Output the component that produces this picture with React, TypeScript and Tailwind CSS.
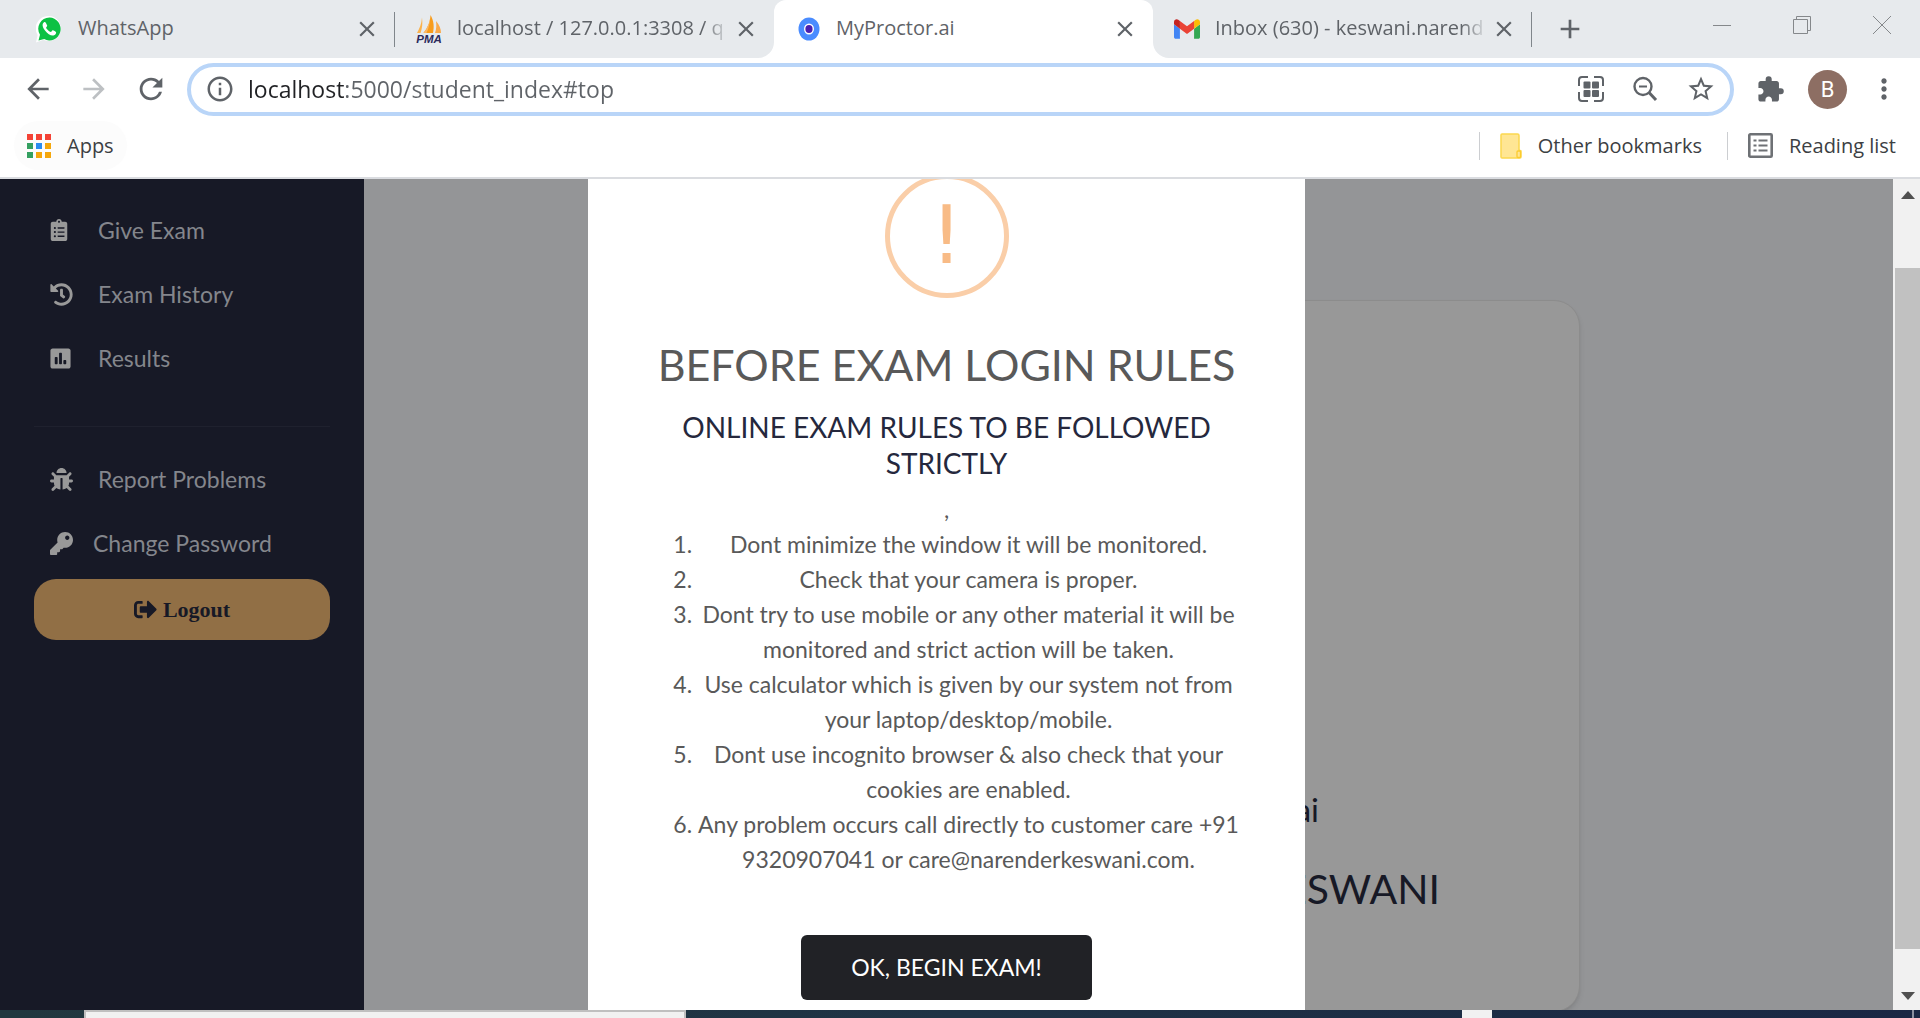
import React from "react";
import type { ReactNode } from "react";
import {
  MdAdd,
  MdArrowBack,
  MdArrowForward,
  MdClose,
  MdExtension,
  MdInfoOutline,
  MdMoreVert,
  MdRefresh,
  MdStarBorder,
} from "react-icons/md";
import { FaBug, FaClipboardList, FaHistory, FaKey, FaPoll, FaSignOutAlt } from "react-icons/fa";

function WhatsAppIcon() {
  return (
    <svg viewBox="0 0 26 28" className="h-7 w-[26px] shrink-0">
      <path d="M13 1a12 12.500 0 1 1-5.500 23.700L0 27.500l1.600-7.500A12.500 12.500 0 0 1 13 1z" fill="#fff" />
      <path d="M13.500 2.500a11 11.500 0 1 1-5.300 21.500L2.500 25.500l1.500-5.800A11.300 11.300 0 0 1 13.500 2.500z" fill="#0cc143" />
      <path
        d="M9.800 7.700c-.4-.9-1.200-.9-1.800-.5-2.300 1.700-1.500 5 .8 8 2.800 3.700 6 5.600 8.600 5.200 1.900-.3 2.900-1.900 2.700-3.200-.1-.5-2.600-1.700-3.200-1.900-.9-.2-1.300 1.700-2 1.700-1.400-.2-4.500-2.900-4.800-4.200 0-.7 1.300-1.400 1.100-2.200z"
        fill="#fff"
      />
    </svg>
  );
}

function PmaIcon() {
  return (
    <svg viewBox="0 0 28 30" className="h-[30px] w-7 shrink-0">
      <path d="M7 3.500c.8 6 .2 11-1.500 15.500H2c2.500-4.500 4.500-9 5-15.500z" fill="#fbb24c" />
      <path d="M15.500 1c3.500 6 3.800 12 2.500 18H8.500C12.500 14 15 8.500 15.500 1z" fill="#f89c1c" />
      <path d="M15.500 1c-.5 7-1.500 13-4 18H8.500C12.500 14 15 8.500 15.500 1z" fill="#fbb868" />
      <path d="M21 7c3.500 4 5 8 5 12h-6c1.500-4 1.500-8 1-12z" fill="#f9a94a" />
      <text x="14" y="28.500" textAnchor="middle" fontFamily="Liberation Sans" fontWeight="700" fontStyle="italic" fontSize="11.500" fill="#2c2a5c">
        PMA
      </text>
    </svg>
  );
}

function ProctorIcon() {
  return (
    <svg viewBox="0 0 22 24" className="ml-1 h-6 w-[22px] shrink-0">
      <ellipse cx="11" cy="12" rx="10.500" ry="11.500" fill="#4a8cff" />
      <ellipse cx="11" cy="12" rx="5" ry="5.500" fill="#fff" />
      <ellipse cx="11" cy="12" rx="3.600" ry="4" fill="#4a1fb0" />
    </svg>
  );
}

function GmailIcon() {
  return (
    <svg viewBox="52 42 88 66" className="ml-px h-5 w-[26px] shrink-0">
      <path fill="#4285f4" d="M58 108h14V74L52 59v43c0 3.320 2.690 6 6 6" />
      <path fill="#34a853" d="M120 108h14c3.320 0 6-2.690 6-6V59l-20 15" />
      <path fill="#fbbc04" d="M120 48v26l20-15v-8c0-7.420-8.470-11.650-14.400-7.200" />
      <path fill="#ea4335" d="M72 74V48l24 18 24-18v26L96 92" />
      <path fill="#c5221f" d="M52 51v8l20 15V48l-5.600-4.200c-5.940-4.450-14.400-.22-14.400 7.200" />
    </svg>
  );
}

function QrIcon() {
  return (
    <svg viewBox="0 0 26 26" className="size-[26px]" fill="none" stroke="#5f6368" strokeWidth="2">
      <path d="M1 10V4a3 3 0 0 1 3-3h6M16 1h6a3 3 0 0 1 3 3v6M25 16v6a3 3 0 0 1-3 3h-6M10 25H4a3 3 0 0 1-3-3v-6" />
      <g fill="#5f6368" stroke="none">
        <rect x="5.500" y="5.500" width="7" height="7" rx="1" />
        <rect x="14" y="5.500" width="7" height="7" rx="1" />
        <rect x="5.500" y="14" width="7" height="7" rx="1" />
        <rect x="14" y="14" width="7" height="7" rx="1" />
      </g>
    </svg>
  );
}

function ZoomOutIcon() {
  return (
    <svg viewBox="0 0 26 26" className="size-[26px]" fill="none" stroke="#5f6368">
      <circle cx="11" cy="10.500" r="8.500" strokeWidth="2.400" />
      <path d="M7 10.500h8" strokeWidth="2" />
      <path d="M17 16.500l7 7.500" strokeWidth="3" />
    </svg>
  );
}

function AppsIcon() {
  const colors = ["#f44336", "#f44336", "#f44336", "#34a060", "#2b8cf0", "#f5a70c", "#34a060", "#f5a70c", "#f5a70c"];
  return (
    <svg viewBox="0 0 24 24" className="size-6">
      {colors.map((c, i) => (
        <rect key={i} x={(i % 3) * 9} y={Math.floor(i / 3) * 9} width="6" height="6" fill={c} />
      ))}
    </svg>
  );
}

function FolderIcon() {
  return (
    <svg viewBox="0 0 22 26" className="h-[26px] w-[22px]">
      <path d="M2 1h15.500a1.500 1.500 0 0 1 1.500 1.500V17l2 1v6a1 1 0 0 1-1 1H2a1 1 0 0 1-1-1V2a1 1 0 0 1 1-1z" fill="#ffe694" stroke="#fcd84f" strokeWidth="1.500" />
      <rect x="17" y="18" width="3.500" height="6.500" rx="1" fill="#ffe694" stroke="#fccb2e" strokeWidth="1.300" />
    </svg>
  );
}

function ReadingIcon() {
  return (
    <svg viewBox="0 0 25 25" className="size-[25px]" fill="none" stroke="#6e7175" strokeWidth="2.600">
      <rect x="1.300" y="1.300" width="22.400" height="22.400" rx="1" />
      <path d="M5.500 7.500h3M5.500 12.500h3M5.500 17.500h3M10.500 7.500h9M10.500 12.500h9M10.500 17.500h9" strokeWidth="2.200" />
    </svg>
  );
}

function Tab({ icon, title, active, fade }: { icon: ReactNode; title: string; active?: boolean; fade?: boolean }) {
  return (
    <div className={active ? "relative flex h-full w-[379px] min-w-0 items-center rounded-t-xl bg-white pr-3 pl-5" : "flex h-full w-[379px] min-w-0 items-center pr-3 pl-5"}>
      {active && (
        <>
          <svg viewBox="0 0 16 16" className="absolute bottom-0 -left-4 size-4">
            <path d="M16 0v16H0A16 16 0 0 0 16 0z" fill="#fff" />
          </svg>
          <svg viewBox="0 0 16 16" className="absolute -right-4 bottom-0 size-4">
            <path d="M0 0v16h16A16 16 0 0 1 0 0z" fill="#fff" />
          </svg>
        </>
      )}
      <span className="flex w-7 shrink-0 justify-start">{icon}</span>
      <span
        className={
          fade
            ? "ml-[14px] min-w-0 flex-1 overflow-hidden pb-[2px] whitespace-nowrap [mask-image:linear-gradient(90deg,#000_90%,transparent)]"
            : "ml-[14px] min-w-0 flex-1 overflow-hidden pb-[2px] whitespace-nowrap"
        }
      >
        {title}
      </span>
      <button aria-label={`Close ${title}`} className="flex size-8 shrink-0 items-center justify-center text-[#5f6368]">
        <MdClose size={26} />
      </button>
    </div>
  );
}

function NavLink({ icon, label, tight }: { icon: ReactNode; label: string; tight?: boolean }) {
  return (
    <a href="#top" className="flex h-16 items-center pl-4 text-[23px] text-[#84868c]">
      <span className="w-[23px] text-[#999]">{icon}</span>
      <span className={tight ? "ml-5" : "ml-[25px]"}>{label}</span>
    </a>
  );
}

const rules = [
  "Dont minimize the window it will be monitored.",
  "Check that your camera is proper.",
  "Dont try to use mobile or any other material it will be monitored and strict action will be taken.",
  "Use calculator which is given by our system not from your laptop/desktop/mobile.",
  "Dont use incognito browser & also check that your cookies are enabled.",
  "Any problem occurs call directly to customer care +91 9320907041 or care@narenderkeswani.com.",
];

export default function App() {
  return (
    <div className="flex h-screen flex-col overflow-hidden bg-white font-['Open_Sans',sans-serif]">
      <header className="shrink-0 border-b-2 border-[#dadce0]">
        <div className="flex h-[58px] items-center bg-[#e7eaed] pl-4 text-[20px] text-[#5f6368]">
          <Tab icon={<WhatsAppIcon />} title="WhatsApp" />
          <span className="-ml-px h-[35px] w-px shrink-0 bg-[#80868b]" />
          <Tab icon={<PmaIcon />} title="localhost / 127.0.0.1:3308 / q" fade />
          <Tab icon={<ProctorIcon />} title="MyProctor.ai" active />
          <Tab icon={<GmailIcon />} title="Inbox (630) - keswani.narend" fade />
          <span className="-ml-px h-[35px] w-px shrink-0 bg-[#80868b]" />
          <button aria-label="New tab" className="ml-[22px] shrink-0">
            <MdAdd size={32} />
          </button>
          <div className="mr-7 mb-2 ml-auto flex items-center gap-[60px]">
            <button aria-label="Minimize">
              <svg viewBox="0 0 20 20" className="size-5" stroke="#85888b"><path d="M1 10.500h18" /></svg>
            </button>
            <button aria-label="Restore">
              <svg viewBox="0 0 20 20" className="size-5" stroke="#85888b" fill="none"><path d="M1.500 4.500h14v14h-14zM4.500 4.500v-3h14v14h-3" /></svg>
            </button>
            <button aria-label="Close window">
              <svg viewBox="0 0 20 20" className="size-5" stroke="#85888b"><path d="M1 1l18 18M19 1L1 19" /></svg>
            </button>
          </div>
        </div>

        <div className="flex h-[62px] items-center pr-5 pl-[22px] text-[#5f6368]">
          <button aria-label="Back"><MdArrowBack size={32} /></button>
          <button aria-label="Forward" className="ml-6 text-[#bdc0c3]"><MdArrowForward size={32} /></button>
          <button aria-label="Reload" className="ml-6"><MdRefresh size={34} /></button>
          <div className="ml-[19px] flex h-[53px] min-w-0 flex-1 items-center gap-7 rounded-full border-4 border-[#b9d5f8] pr-[14px] pl-[14px]">
            <MdInfoOutline size={30} className="shrink-0" />
            <input
              aria-label="Address"
              defaultValue="localhost:5000/student_index#top"
              className="-ml-[15px] min-w-0 flex-1 bg-[linear-gradient(90deg,#202124_98px,#5f6368_98px)] bg-clip-text text-[23px] text-transparent outline-none"
            />
            <button aria-label="QR code"><QrIcon /></button>
            <button aria-label="Zoom"><ZoomOutIcon /></button>
            <button aria-label="Bookmark this page"><MdStarBorder size={30} /></button>
          </div>
          <button aria-label="Extensions" className="ml-[22px]"><MdExtension size={29} /></button>
          <button aria-label="Profile" className="ml-[23px] flex size-[39px] items-center justify-center rounded-full bg-[#8d6e63] font-['Roboto',sans-serif] text-[22px] text-white">B</button>
          <button aria-label="Menu" className="ml-[21px]"><MdMoreVert size={32} /></button>
        </div>

        <div className="flex h-[57px] items-start justify-between px-[14px] pt-[1px] text-[20px] text-[#3c4043]">
          <button className="flex h-[49px] items-center gap-4 rounded-full bg-[#fcfcfc] px-[13px]">
            <AppsIcon />
            Apps
          </button>
          <div className="flex h-[49px] items-center pr-[10px]">
            <span className="h-7 w-px bg-[#ccced1]" />
            <button className="ml-5 flex items-center gap-4"><FolderIcon />Other bookmarks</button>
            <span className="ml-[25px] h-7 w-px bg-[#ccced1]" />
            <button className="ml-5 flex items-center gap-4"><ReadingIcon />Reading list</button>
          </div>
        </div>
      </header>

      <div className="flex min-h-0 flex-1">
        <div className="relative flex min-w-0 flex-1 overflow-hidden bg-[#949597] font-['Lato',sans-serif]">
          <aside className="w-[364px] shrink-0 bg-[#171926] px-[34px] pt-[19px]">
            <nav>
              <NavLink icon={<FaClipboardList size={22} className="-ml-[2px]" />} label="Give Exam" />
              <NavLink icon={<FaHistory size={23} />} label="Exam History" />
              <NavLink icon={<FaPoll size={23} className="-ml-px" />} label="Results" />
              <hr className="mt-9 mb-5 border-[#1f212e]" />
              <NavLink icon={<FaBug size={23} />} label="Report Problems" />
              <NavLink icon={<FaKey size={23} />} label="Change Password" tight />
            </nav>
            <button className="mt-1 flex h-[61px] w-full items-center justify-center gap-[6px] rounded-[22px] bg-[#916f45] font-['Liberation_Serif',serif] text-[22px] font-bold text-[#171926]">
              <FaSignOutAlt size={23} />
              Logout
            </button>
          </aside>

          <main className="flex min-w-0 flex-1 justify-end pt-[121px] pr-[313px]">
            <section className="flex h-[712px] w-[704px] flex-col items-end rounded-[26px] border border-[#8c8c8c] bg-[#989898] pt-[488px] pr-[139px] text-[#171926] shadow-md">
              <h3 className="pr-[121px] text-[33px] leading-10">ai</h3>
              <h2 className="mt-9 text-[41px] leading-[48px]">KESWANI</h2>
            </section>
          </main>

          <div className="pointer-events-none absolute inset-0 flex items-start justify-center">
            <div role="dialog" aria-labelledby="rules-title" className="pointer-events-auto -mt-5 flex w-[717px] flex-col items-center bg-white px-[66px] pt-[15px] pb-10 text-center text-[#595959]">
              <div className="flex size-[124px] items-center justify-center rounded-full border-[5px] border-[#facea8] font-['DejaVu_Sans',sans-serif] text-[80px] leading-none text-[#f8bb86]">!</div>
              <h2 id="rules-title" className="mt-[39px] text-[43px] leading-[56px] whitespace-nowrap">BEFORE EXAM LOGIN RULES</h2>
              <h3 className="mt-4 px-1 text-[28px] leading-9 text-[#25283d]">ONLINE EXAM RULES TO BE FOLLOWED STRICTLY</h3>
              <div className="mt-[11px] text-[23px] leading-[35px]">
                <p>,</p>
                <ol className="list-decimal pl-11">
                  {rules.map((rule) => (
                    <li key={rule}>{rule}</li>
                  ))}
                </ol>
              </div>
              <button className="mt-[58px] h-[65px] rounded-md bg-[#212226] px-[50px] text-[23px] text-white">OK, BEGIN EXAM!</button>
            </div>
          </div>
        </div>

        <div className="flex w-[27px] shrink-0 flex-col items-center bg-[#f1f1f1] pl-[2px]" aria-hidden="true">
          <svg viewBox="0 0 14 8" className="mt-3 h-2 w-[14px]"><path d="M7 0l7 8H0z" fill="#505050" /></svg>
          <span className="grow-[69]" />
          <span className="w-full grow-[681] bg-[#c1c1c1]" />
          <span className="grow-[43]" />
          <svg viewBox="0 0 14 8" className="mb-[10px] h-2 w-[14px]"><path d="M0 0h14L7 8z" fill="#505050" /></svg>
        </div>
      </div>

      <footer className="flex h-2 shrink-0 bg-linear-to-r from-[#21383f] via-[#1f3345] to-[#1a2744] pl-[84px]">
        <span className="w-[602px] border-x-2 border-t-2 border-[#bfbfbf] bg-[#f1f1f1]" />
        <span className="mr-[420px] ml-auto w-[30px] bg-[#f1f1f1]" />
        <span className="mr-[6px] w-[2px] bg-[#8a90a0]" />
      </footer>
    </div>
  );
}
